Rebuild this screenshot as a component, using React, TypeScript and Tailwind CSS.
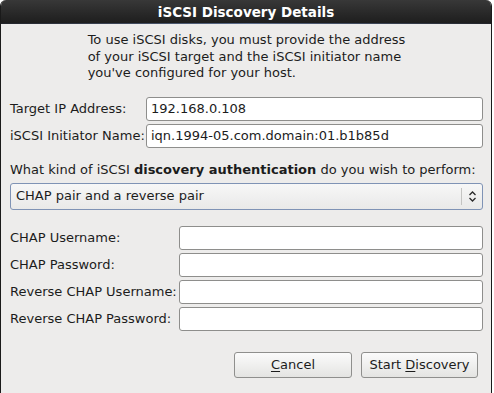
import React from 'react';

interface FieldRow {
  label: string;
  value: string;
}

const topFields: FieldRow[] = [
  { label: 'Target IP Address:', value: '192.168.0.108' },
  { label: 'iSCSI Initiator Name:', value: 'iqn.1994-05.com.domain:01.b1b85d' },
];

const chapFields: FieldRow[] = [
  { label: 'CHAP Username:', value: '' },
  { label: 'CHAP Password:', value: '' },
  { label: 'Reverse CHAP Username:', value: '' },
  { label: 'Reverse CHAP Password:', value: '' },
];

const TextBox: React.FC<{ value: string }> = ({ value }) => (
  <div className="h-[24px] bg-white border border-[#8e8e8c] rounded-[3px] flex items-center pl-[4px] overflow-hidden whitespace-nowrap">
    {value}
  </div>
);

const App: React.FC = () => {
  return (
    <div
      className="w-[494px] h-[393px] bg-white overflow-hidden text-[13px] text-[#1c1c1c]"
      style={{ fontFamily: '"DejaVu Sans", Verdana, sans-serif' }}
    >
      <div className="w-[492px] h-[400px] flex flex-col bg-[#edeceb] border-x border-[#1a1a1a] rounded-t-[6px] overflow-hidden">
        {/* title bar */}
        <div className="h-[23px] shrink-0 bg-gradient-to-b from-[#383838] to-[#1e1e1e] flex items-center justify-center text-white font-bold text-[13.5px] pt-[1px]">
          iSCSI Discovery Details
        </div>
        <div className="h-[1px] shrink-0 bg-gradient-to-r from-[#22242a] via-[#5c6d8c] to-[#22242a]" />

        <div className="flex flex-col pl-[9px] pr-[8px]">
          <p className="mx-auto w-fit leading-[16.5px] mt-[8px]">
            To use iSCSI disks, you must provide the address
            <br />
            of your iSCSI target and the iSCSI initiator name
            <br />
            you've configured for your host.
          </p>

          <div className="grid grid-cols-[136px_1fr] gap-y-[3px] items-center mt-[15px]">
            {topFields.map((f, i) => (
              <React.Fragment key={i}>
                <span className="whitespace-nowrap">{f.label}</span>
                <TextBox value={f.value} />
              </React.Fragment>
            ))}
          </div>

          <p className="leading-[16px] mt-[14px] whitespace-nowrap">
            What kind of iSCSI <b>discovery authentication</b> do you wish to perform:
          </p>

          <div className="mt-[5px] h-[27px] rounded-[3px] border border-[#7f93b5] bg-gradient-to-b from-[#f7f7f7] to-[#e9e9e8] flex items-center">
            <span className="flex-1 pl-[5px] pb-[1px]">CHAP pair and a reverse pair</span>
            <div className="w-px h-[17px] bg-[#c4c4c2]" />
            <div className="w-[20px] flex justify-center">
              <svg width="9" height="13" viewBox="0 0 9 13" fill="none" stroke="#2a2a2a" strokeWidth="1.3">
                <path d="M1.5 5 L4.5 2 L7.5 5" />
                <path d="M1.5 8 L4.5 11 L7.5 8" />
              </svg>
            </div>
          </div>

          <div className="grid grid-cols-[169px_1fr] gap-y-[3px] items-center mt-[16px]">
            {chapFields.map((f, i) => (
              <React.Fragment key={i}>
                <span className="whitespace-nowrap">{f.label}</span>
                <TextBox value={f.value} />
              </React.Fragment>
            ))}
          </div>

          <div className="flex justify-end gap-[9px] mt-[21px] pr-[5px]">
            <button className="w-[118px] h-[26px] rounded-[3px] border border-[#8f8f8d] bg-gradient-to-b from-[#fbfbfb] to-[#e4e4e2] flex items-center justify-center">
              <span>
                <span className="underline underline-offset-2">C</span>ancel
              </span>
            </button>
            <button className="w-[117px] h-[26px] rounded-[3px] border border-[#8f8f8d] bg-gradient-to-b from-[#fbfbfb] to-[#e4e4e2] flex items-center justify-center">
              <span>
                Start <span className="underline underline-offset-2">D</span>iscovery
              </span>
            </button>
          </div>
        </div>
      </div>
    </div>
  );
};

export default App;
